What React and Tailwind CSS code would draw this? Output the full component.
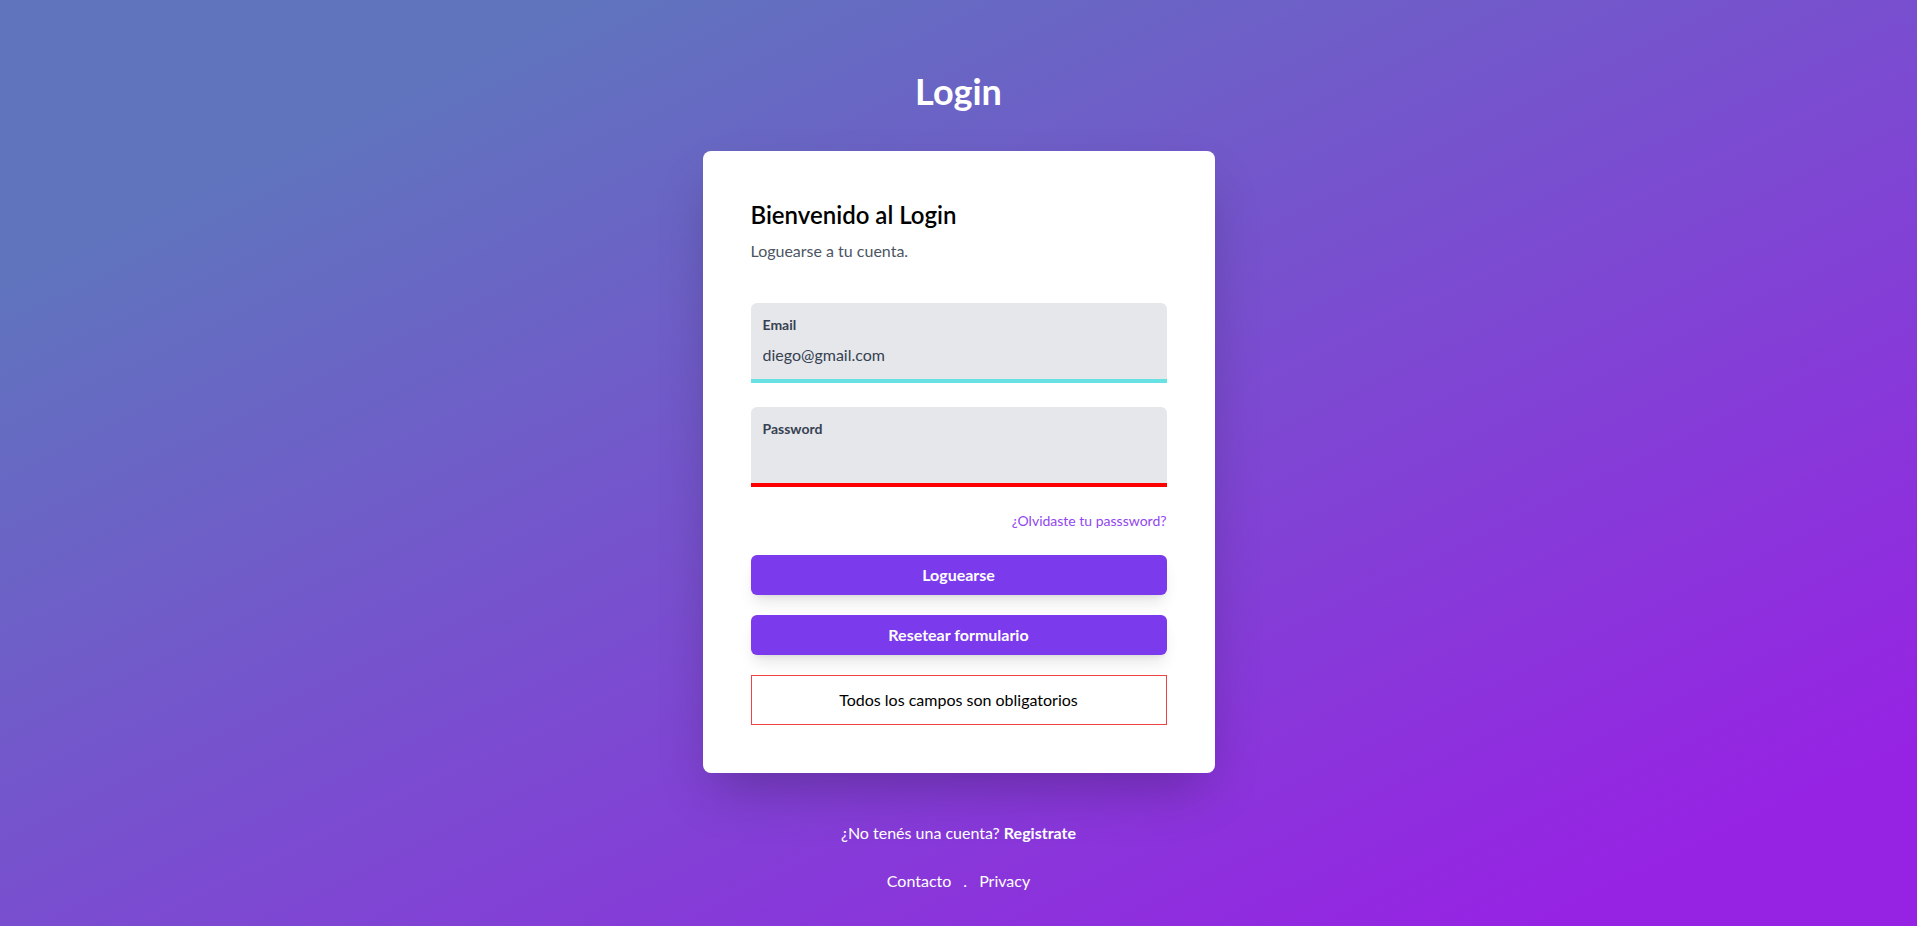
import { useState } from 'react';

function Field({ label, type, value, onChange, valid }) {
  return (
    <div
      className={`bg-[#e5e7eb] rounded-t-md px-3 pt-3 pb-3 border-b-4 ${
        valid ? 'border-[#67e1e1]' : 'border-[#ff0000]'
      }`}
    >
      <label className="block text-sm leading-5 font-bold text-[#374151]">{label}</label>
      <input
        type={type}
        value={value}
        onChange={(e) => onChange(e.target.value)}
        className="mt-2 block w-full h-6 bg-transparent text-base leading-6 text-[#374151] outline-none"
      />
    </div>
  );
}

export default function App() {
  const [email, setEmail] = useState('diego@gmail.com');
  const [password, setPassword] = useState('');

  const handleReset = () => {
    setEmail('');
    setPassword('');
  };

  return (
    <div
      className="min-h-screen w-full bg-linear-to-br/srgb from-[#5f74bd] from-15% to-[#9623e3] to-90% pt-[71px] pb-7 flex flex-col items-center"
      style={{ fontFamily: 'Lato, "Open Sans", sans-serif' }}
    >
      {/* Title */}
      <h1 className="text-4xl leading-10 font-bold text-white">Login</h1>

      {/* Card */}
      <div className="mt-10 w-full max-w-lg bg-white rounded-lg shadow-2xl p-12">
        <h2 className="text-2xl leading-8 font-semibold text-black">Bienvenido al Login</h2>
        <p className="mt-2 text-base leading-6 text-[#4b5563]">Loguearse a tu cuenta.</p>

        <form className="mt-10" onSubmit={(e) => e.preventDefault()}>
          <Field label="Email" type="email" value={email} onChange={setEmail} valid={email.length > 0} />
          <div className="mt-6">
            <Field
              label="Password"
              type="password"
              value={password}
              onChange={setPassword}
              valid={password.length > 0}
            />
          </div>

          <div className="mt-6 flex justify-end">
            <a href="#" className="text-sm leading-5 text-[#9146f0] hover:underline">
              ¿Olvidaste tu passsword?
            </a>
          </div>

          <button
            type="submit"
            className="mt-6 w-full h-10 rounded-md bg-[#7c3aed] text-white font-bold text-base shadow-lg hover:bg-[#6d28d9] transition"
          >
            Loguearse
          </button>
          <button
            type="button"
            onClick={handleReset}
            className="mt-5 w-full h-10 rounded-md bg-[#7c3aed] text-white font-bold text-base shadow-lg hover:bg-[#6d28d9] transition"
          >
            Resetear formulario
          </button>

          <div className="mt-5 border border-[#ef4444] py-3 text-center text-base leading-6 text-black">
            Todos los campos son obligatorios
          </div>
        </form>
      </div>

      {/* Footer */}
      <p className="mt-12 text-base leading-6 text-white">
        ¿No tenés una cuenta? <a href="#" className="font-bold">Registrate</a>
      </p>
      <div className="mt-6 text-base leading-6 text-white">
        <a href="#">Contacto</a>
        <span className="mx-3">.</span>
        <a href="#">Privacy</a>
      </div>
    </div>
  );
}
